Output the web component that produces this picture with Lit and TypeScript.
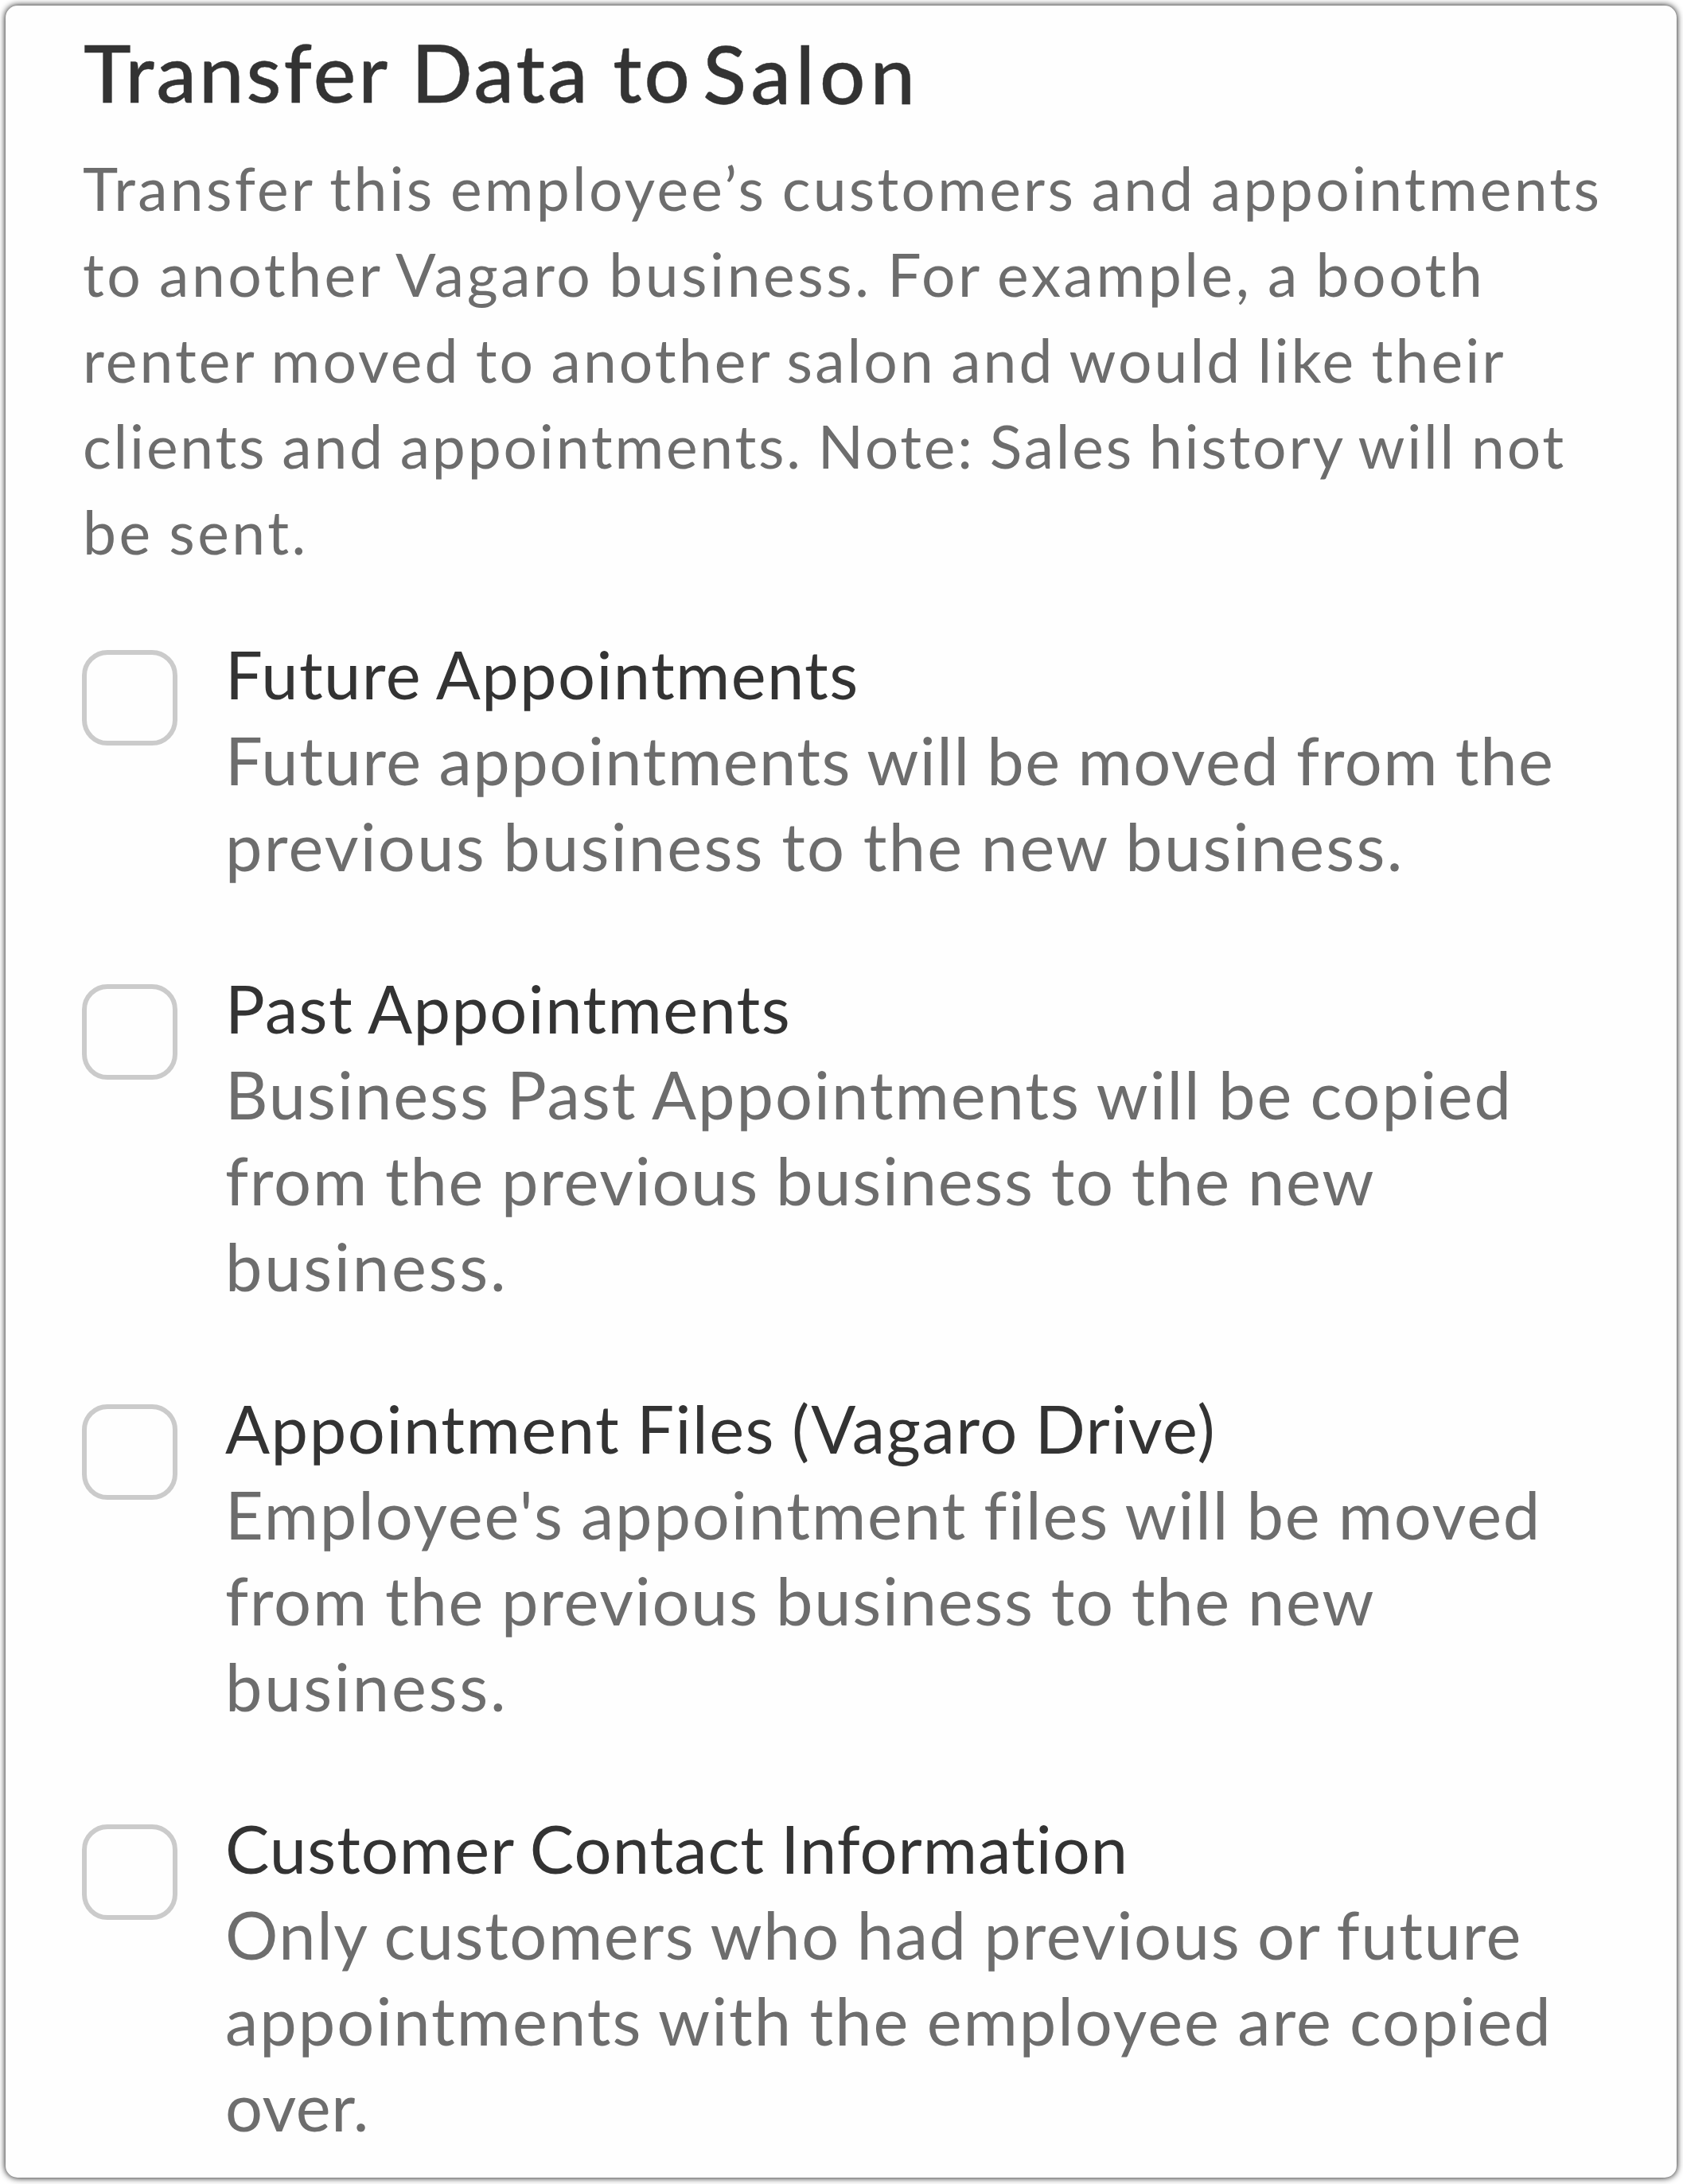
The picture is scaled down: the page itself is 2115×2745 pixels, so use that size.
import {LitElement, css, html} from 'lit';
import {customElement, property, state} from 'lit/decorators.js';

interface Line {
  text: string;
  // letter-spacing in px
  track: number;
}

interface TransferOption {
  id: string;
  title: Line;
  description: Line[];
}

const INTRO: Line[] = [
  {text: 'Transfer this employee’s customers and appointments', track: 3.26},
  {text: 'to another Vagaro business. For example, a booth', track: 3.55},
  {text: 'renter moved to another salon and would like their', track: 3.1},
  {text: 'clients and appointments. Note: Sales history will not', track: 2.79},
  {text: 'be sent.', track: 3.5},
];

const OPTIONS: TransferOption[] = [
  {
    id: 'future',
    title: {text: 'Future Appointments', track: 1.4},
    description: [
      {text: 'Future appointments will be moved from the', track: 1.53},
      {text: 'previous business to the new business.', track: 2.23},
    ],
  },
  {
    id: 'past',
    title: {text: 'Past Appointments', track: 1.42},
    description: [
      {text: 'Business Past Appointments will be copied', track: 1.99},
      {text: 'from the previous business to the new', track: 1.75},
      {text: 'business.', track: 2.8},
    ],
  },
  {
    id: 'files',
    title: {text: 'Appointment Files (Vagaro Drive)', track: 1.57},
    description: [
      {text: "Employee's appointment files will be moved", track: 1.89},
      {text: 'from the previous business to the new', track: 1.75},
      {text: 'business.', track: 2.8},
    ],
  },
  {
    id: 'contact',
    title: {text: 'Customer Contact Information', track: 1.05},
    description: [
      {text: 'Only customers who had previous or future', track: 1.6},
      {text: 'appointments with the employee are copied', track: 2.01},
      {text: 'over.', track: 0.6},
    ],
  },
];

const renderLine = (line: Line) =>
  html`<span class="line" style="letter-spacing: ${line.track}px">${line.text}</span>`;

@customElement('transfer-option')
export class TransferOptionRow extends LitElement {
  @property({attribute: false}) option!: TransferOption;
  @property({type: Boolean}) checked = false;

  toggle() {
    this.dispatchEvent(new CustomEvent('toggle-option', {detail: this.option.id}));
  }

  render() {
    return html`
      <label class="option">
        <input
          class="box"
          type="checkbox"
          .checked=${this.checked}
          @change=${this.toggle}
        />
        <div class="text">
          <div class="title">${renderLine(this.option.title)}</div>
          <div class="description">${this.option.description.map(renderLine)}</div>
        </div>
      </label>
    `;
  }

  static styles = css`
    :host {
      display: block;
    }

    .option {
      display: flex;
      align-items: flex-start;
      gap: 60px;
      font-size: 83px;
      line-height: 108px;
      word-spacing: -2px;
    }

    .box {
      appearance: none;
      flex: none;
      box-sizing: border-box;
      width: 120px;
      height: 120px;
      margin: 24px 0 0;
      border: 6px solid #cbcbcb;
      border-radius: 32px;
    }
    .box:checked {
      background-color: #cbcbcb;
    }

    .line {
      display: block;
      white-space: nowrap;
    }

    .title {
      color: #333;
    }

    .description {
      color: #6d6d6d;
    }
  `;
}

@customElement('app-root')
export class AppRoot extends LitElement {
  @state() private selected: string[] = [];

  toggleOption(event: CustomEvent<string>) {
    const id = event.detail;
    this.selected = this.selected.includes(id)
      ? this.selected.filter((item) => item !== id)
      : [...this.selected, id];
  }

  render() {
    return html`
      <div class="card">
        <h1 class="heading">
          <span class="action">Transfer Data to</span>
          <span class="target">Salon</span>
        </h1>
        <p class="intro">${INTRO.map(renderLine)}</p>
        <div class="options">
          ${OPTIONS.map((option) => html`
            <transfer-option
              .option=${option}
              .checked=${this.selected.includes(option.id)}
              @toggle-option=${this.toggleOption}
            ></transfer-option>
          `)}
        </div>
      </div>
    `;
  }

  static styles = css`
    :host {
      display: block;
      box-sizing: border-box;
      height: 2745px;
      padding: 7px 8px 8px 7px;
      overflow: hidden;
      background-color: #fff;
      font-family: Lato, 'Open Sans', sans-serif;
    }

    .card {
      box-sizing: border-box;
      height: 100%;
      padding: 23px 0 0 96px;
      border-radius: 15px;
      background-color: #fefefe;
      box-shadow: 0 0 9px #000;
    }

    .heading {
      display: flex;
      align-items: flex-start;
      height: 120px;
      margin: 0 0 32px 2px;
      font-size: 101px;
      font-weight: 500;
      line-height: 120px;
      color: #333;
      -webkit-text-stroke: 0.4px #333;
    }

    .action {
      letter-spacing: 3.1px;
    }

    .target {
      margin: 2px 0 0 13px;
      letter-spacing: 6px;
    }

    .intro {
      margin: 0 0 71px 1px;
      font-size: 75px;
      line-height: 108px;
      word-spacing: -3px;
      color: #6d6d6d;
    }

    .line {
      display: block;
      white-space: nowrap;
    }

    .options {
      display: flex;
      flex-direction: column;
      gap: 96px;
    }
  `;
}
